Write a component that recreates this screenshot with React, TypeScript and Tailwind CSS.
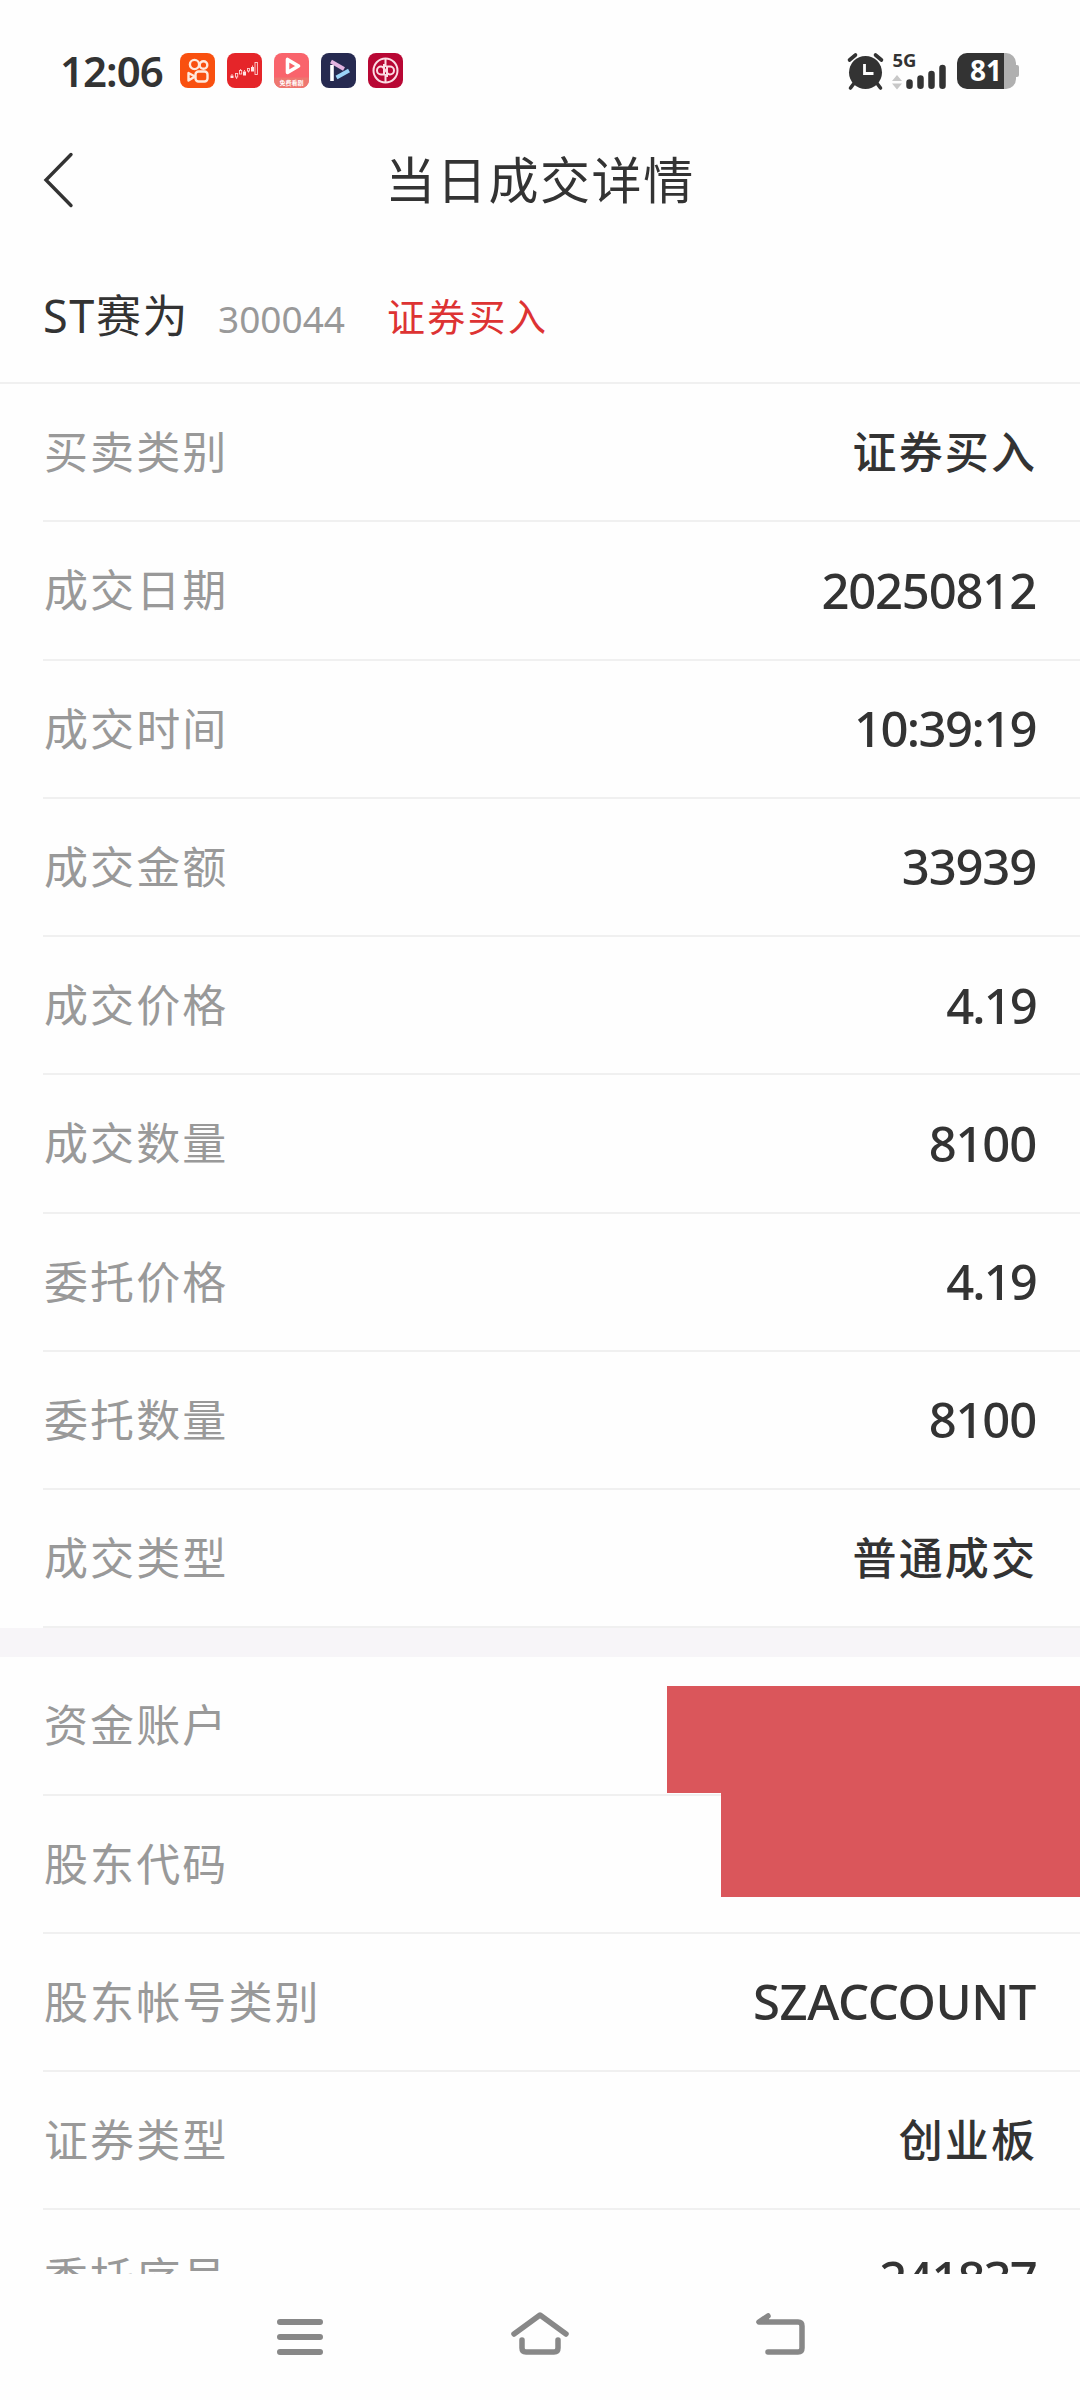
const fontStack = "font-['Noto_Sans','Noto_Sans_CJK_SC',sans-serif]";

type Row = { label: string; value: string; spacing?: string };

const tradeRows: Row[] = [
  { label: "买卖类别", value: "证券买入" },
  { label: "成交日期", value: "20250812", spacing: "tracking-[-1.2px]" },
  { label: "成交时间", value: "10:39:19", spacing: "tracking-[-1.6px]" },
  { label: "成交金额", value: "33939", spacing: "tracking-[-1.2px]" },
  { label: "成交价格", value: "4.19", spacing: "tracking-[-1.9px]" },
  { label: "成交数量", value: "8100", spacing: "tracking-[-1.2px]" },
  { label: "委托价格", value: "4.19", spacing: "tracking-[-1.9px]" },
  { label: "委托数量", value: "8100", spacing: "tracking-[-1.2px]" },
  { label: "成交类型", value: "普通成交" },
];

const accountRows: Row[] = [
  { label: "资金账户", value: "" },
  { label: "股东代码", value: "" },
  { label: "股东帐号类别", value: "SZACCOUNT", spacing: "tracking-[-0.4px]" },
  { label: "证券类型", value: "创业板" },
  { label: "委托序号", value: "241837", spacing: "tracking-[-1.9px]" },
];

function DetailRow({ label, value, spacing }: Row) {
  return (
    <div className="ml-[43px] flex h-[138.25px] items-center justify-between border-b-2 border-[#f0f0f0] pr-[44px] pl-[1px]">
      <span className="text-[44px] leading-none tracking-[2.1px] text-[#999999]">
        {label}
      </span>
      {spacing ? (
        <span
          className={`font-['Noto_Sans',sans-serif] text-[49px] leading-none font-medium text-[#333333] ${spacing}`}
        >
          {value}
        </span>
      ) : (
        <span className="-mr-[1px] text-[44px] leading-none font-medium tracking-[2.1px] text-[#333333]">
          {value}
        </span>
      )}
    </div>
  );
}

function AppIcons() {
  return (
    <div className="ml-[15px] flex gap-[12px]">
      <svg width="35" height="35" viewBox="0 0 35 35">
        <rect width="35" height="35" rx="8" fill="#f9500f" />
        <g fill="none" stroke="#ffe9dc" strokeWidth="2.4">
          <circle cx="14.5" cy="11.5" r="4.6" />
          <circle cx="23.5" cy="12" r="3.8" />
          <rect x="15.5" y="18.500" width="12" height="10" rx="3" />
          <path d="M15 23.5 8.5 20v7.5z" strokeLinejoin="round" />
        </g>
      </svg>
      <svg width="35" height="35" viewBox="0 0 35 35">
        <rect width="35" height="35" rx="8" fill="#e52529" />
        <g fill="#ffe4e4">
          <rect x="3.5" y="22.500" width="3" height="2.500" />
          <rect x="16" y="18.500" width="3" height="4" />
          <rect x="24" y="14" width="3" height="4.500" />
        </g>
        <g fill="none" stroke="#ffd0d0" strokeWidth="0.9">
          <rect x="8.5" y="20.5" width="2.2" height="3.5" />
          <rect x="12.5" y="17.5" width="2.2" height="3.5" />
          <rect x="20.5" y="15.500" width="2" height="2.500" />
          <rect x="28" y="9.5" width="2.4" height="12" />
          <path d="M5 21v1.500M9.600 24v2M13.600 16v1.500M17.5 17v1.500M21.5 18v1.500M25.5 12.500v1.500" />
        </g>
      </svg>
      <svg width="35" height="35" viewBox="0 0 35 35">
        <rect width="35" height="35" rx="8" fill="#f9646c" />
        <path d="M0 24.5h35V27a8 8 0 0 1-8 8H8a8 8 0 0 1-8-8z" fill="#ee7770" />
        <path
          d="M13.5 6.5v13l11-6.5z"
          fill="none"
          stroke="#fff"
          strokeWidth="3.6"
          strokeLinejoin="round"
        />
        <text
          x="17.5"
          y="31.500"
          textAnchor="middle"
          fontSize="6"
          fill="#fff"
          className="font-['Noto_Sans_CJK_SC',sans-serif] font-bold"
        >
          免费看剧
        </text>
      </svg>
      <svg width="35" height="35" viewBox="0 0 35 35">
        <rect width="35" height="35" rx="8" fill="#262a50" />
        <path d="M10 8.500 23 16" stroke="#e3b4e0" strokeWidth="3.8" />
        <path d="M28 17.5 15.500 24.500" stroke="#9bd4f7" strokeWidth="4" />
        <path d="M11 12v16" stroke="#fff" strokeWidth="3.6" />
      </svg>
      <svg width="35" height="35" viewBox="0 0 35 35">
        <rect width="35" height="35" rx="8" fill="#b80734" />
        <g fill="none" stroke="#fbdde4" strokeWidth="2">
          <circle cx="17.5" cy="17.5" r="12" />
          <path d="M17.500 6v8M17.500 21v8" />
          <path d="M19 24V13.500h3a4 4 0 0 1 0 8c-4 0-5-8-9-8a4 4 0 0 0 0 8h3V11" />
        </g>
      </svg>
    </div>
  );
}

function StatusBar() {
  return (
    <div className="flex h-[141px] items-center justify-between pr-[59px] pl-[60px]">
      <div className="flex items-center">
        <span className="w-[105px] text-[42px] leading-none font-semibold tracking-[-1px] text-[#333333]">
          12:06
        </span>
        <AppIcons />
      </div>

      <svg width="175" height="60" viewBox="0 -10 175 60">
        {/* Alarm */}
        <g transform="translate(0 2)">
          <circle cx="19.5" cy="19.5" r="16.5" fill="#333" />
          <path
            d="m3.5 7 6-5M35.5 7l-6-5"
            stroke="#333"
            strokeWidth="3.6"
            strokeLinecap="round"
          />
          <path
            d="m7.5 31-3 4M31.5 31l3 4"
            stroke="#333"
            strokeWidth="3.6"
            strokeLinecap="round"
          />
          <path d="M18.5 11v9.5h9" fill="none" stroke="#fff" strokeWidth="2.8" />
        </g>

        {/* Signal */}
        <text
          x="46.5"
          y="16"
          fontSize="18.5"
          fill="#333"
          textLength="24"
          className="font-['Noto_Sans',sans-serif] font-bold"
        >
          5G
        </text>
        <path d="m46 30 5-6 5 6zM46 32.5h10l-5 6z" fill="#c8c8c8" />
        <path
          d="M63.5 31.5v3.3M74.5 27.5v7.3M85.5 23v11.8M96.5 17v17.8"
          stroke="#333"
          strokeWidth="6.5"
          strokeLinecap="round"
        />

        {/* Battery */}
        <path
          d="M158 2h2a10 10 0 0 1 10 10v2h1a2 2 0 0 1 2 2v8a2 2 0 0 1-2 2h-1v2a10 10 0 0 1-10 10h-2z"
          fill="#b0b0b0"
        />
        <path d="M158 2v36h-37a10 10 0 0 1-10-10V12a10 10 0 0 1 10-10z" fill="#333" />
        <text
          x="140"
          y="30"
          textAnchor="middle"
          fontSize="28"
          fill="#fff"
          className="font-['Noto_Sans',sans-serif] font-bold"
        >
          81
        </text>
      </svg>
    </div>
  );
}

export default function App() {
  return (
    <div className={`flex h-[2400px] w-[1080px] flex-col bg-[#fefefe] ${fontStack}`}>
      <StatusBar />

      {/* Title */}
      <header className="grid h-[77px] grid-cols-[1fr_auto_1fr] items-center">
        <svg width="34" height="60" viewBox="0 0 34 60" className="ml-[42px]">
          <path
            d="M29 4.500 4 30l25 25.500"
            fill="none"
            stroke="#333"
            strokeWidth="3.4"
            strokeLinecap="round"
          />
        </svg>
        <h1 className="text-[50px] leading-none tracking-[1.6px] text-[#333333]">
          当日成交详情
        </h1>
      </header>

      {/* Stock */}
      <div className="flex h-[166px] shrink-0 items-center border-b-2 border-[#f0f0f0] pt-[30px] pl-[43px]">
        <span className="w-[175px] text-[45px] leading-none tracking-[1.6px] text-[#333333]">
          ST赛为
        </span>
        <span className="w-[169px] pt-[6px] text-[37px] leading-none text-[#999999]">
          300044
        </span>
        <span className="pt-[2px] text-[38px] leading-none tracking-[2.3px] text-[#dd3333]">
          证券买入
        </span>
      </div>

      <main className="h-[1890px] overflow-hidden">
        {tradeRows.map((row) => (
          <DetailRow key={row.label} {...row} />
        ))}
        <div className="h-[29px] bg-[#f7f5f8]" />
        <div className="relative">
          {accountRows.map((row) => (
            <DetailRow key={row.label} {...row} />
          ))}
          {/* Redaction blocks over the account values */}
          <div className="absolute top-[29px] right-0 h-[107px] w-[413px] bg-[#da565b]" />
          <div className="absolute top-[135px] right-0 h-[105px] w-[359px] bg-[#da565b]" />
        </div>
      </main>

      {/* Navigation */}
      <nav className="flex h-[126px] items-start justify-between px-[270px] pt-[34px]">
        <svg width="60" height="56" viewBox="0 0 60 56">
          <path
            d="M10 14h40M10 29h40M10 44h40"
            stroke="#888"
            strokeWidth="6"
            strokeLinecap="round"
          />
        </svg>
        <svg width="64" height="56" viewBox="0 0 64 56">
          <g
            fill="none"
            stroke="#888"
            strokeWidth="5.5"
            strokeLinejoin="round"
            strokeLinecap="round"
          >
            <path d="M6 26 32 7l26 19" />
            <path d="M14 32v8q0 4 4 4h28q4 0 4-4v-8" />
          </g>
        </svg>
        <svg width="60" height="56" viewBox="0 0 60 56">
          <path
            d="M18 8 9 14h39q4 0 4 4v22q0 4-4 4H18"
            fill="none"
            stroke="#888"
            strokeWidth="5.5"
            strokeLinecap="round"
            strokeLinejoin="round"
          />
          <path d="M6 15 19 5v9z" fill="#888" />
        </svg>
      </nav>
    </div>
  );
}
